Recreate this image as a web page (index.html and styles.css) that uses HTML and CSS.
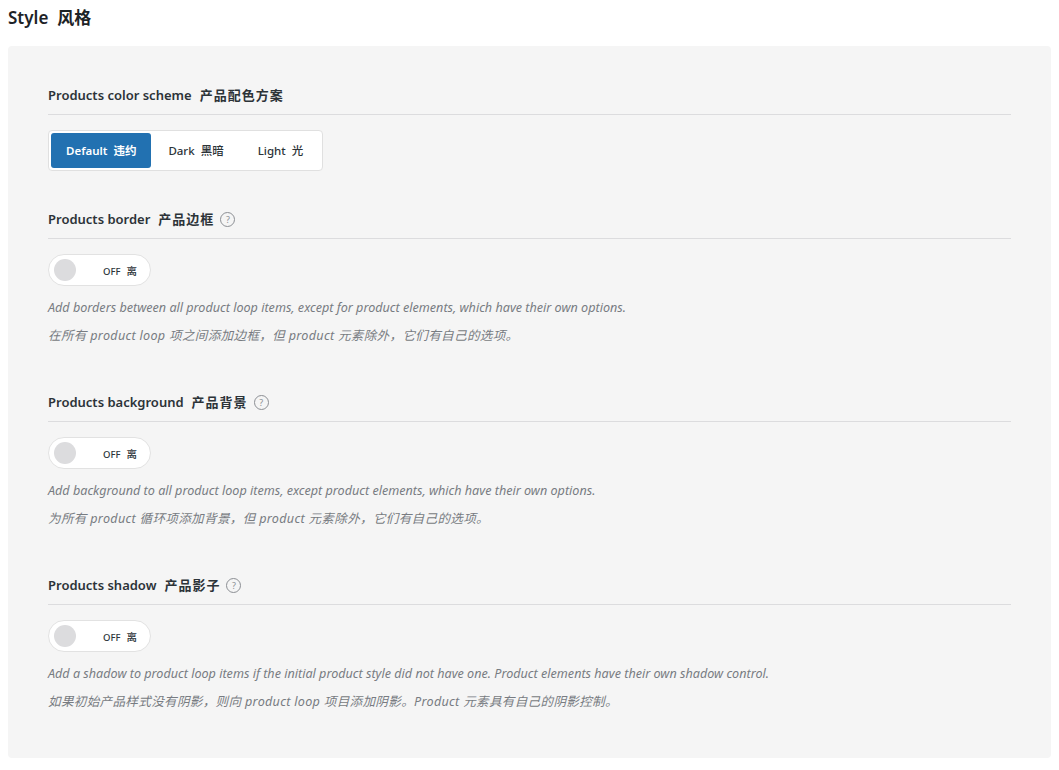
FILE: index.html
```html
<!DOCTYPE html>
<html lang="zh">
<head>
  <meta charset="utf-8">
  <title>Style</title>
  <link rel="stylesheet" href="styles.css">
</head>
<body>
<h2 class="page-title">Style&nbsp; 风格</h2>

<div class="panel">
  <div class="option option-first">
    <h3 class="option-title">Products color scheme<span class="zh">产品配色方案</span></h3>
    <div class="segmented">
      <button class="seg-btn active">Default&nbsp; 违约</button>
      <button class="seg-btn">Dark&nbsp; 黑暗</button>
      <button class="seg-btn">Light&nbsp; 光</button>
    </div>
  </div>

  <div class="option">
    <h3 class="option-title">Products border<span class="zh">产品边框</span><span class="help">?</span></h3>
    <label class="toggle"><span class="knob"></span><span class="toggle-text">OFF&nbsp; <span class="zh">离</span></span></label>
    <p class="desc">Add borders between all product loop items, except for product elements, which have their own options.</p>
    <p class="desc zh-line">在所有 product loop 项之间添加边框，但 product 元素除外，它们有自己的选项。</p>
  </div>

  <div class="option">
    <h3 class="option-title">Products background<span class="zh">产品背景</span><span class="help">?</span></h3>
    <label class="toggle"><span class="knob"></span><span class="toggle-text">OFF&nbsp; <span class="zh">离</span></span></label>
    <p class="desc">Add background to all product loop items, except product elements, which have their own options.</p>
    <p class="desc zh-line">为所有 product 循环项添加背景，但 product 元素除外，它们有自己的选项。</p>
  </div>

  <div class="option">
    <h3 class="option-title">Products shadow<span class="zh">产品影子</span><span class="help">?</span></h3>
    <label class="toggle"><span class="knob"></span><span class="toggle-text">OFF&nbsp; <span class="zh">离</span></span></label>
    <p class="desc">Add a shadow to product loop items if the initial product style did not have one. Product elements have their own shadow control.</p>
    <p class="desc zh-line">如果初始产品样式没有阴影，则向 product loop 项目添加阴影。Product 元素具有自己的阴影控制。</p>
  </div>
</div>
</body>
</html>
```

FILE: styles.css
```css
body {
  margin: 6px 8px 8px;
  background: #fff;
  color: #1d2327;
  font-family: "Noto Sans", "Noto Sans CJK SC", sans-serif;
}
.page-title {
  margin: 0 0 16px;
  font-size: 17px;
  line-height: 24px;
  font-weight: 600;
}
.panel {
  background: #f5f5f5;
  border-radius: 4px;
  padding: 39px 40px 42px;
}
.option { margin-top: 42px; }
.option-first { margin-top: 0; margin-bottom: -4px; }
.option-title {
  display: flex;
  align-items: center;
  margin: 0 0 15px;
  padding-bottom: 9px;
  border-bottom: 1px solid #dcdcde;
  font-size: 13px;
  line-height: 20px;
  font-weight: 600;
  color: #2c3338;
}
.option-title .zh { letter-spacing: 1px; margin-left: 8px; }
.help {
  display: inline-flex;
  align-items: center;
  justify-content: center;
  width: 13px;
  height: 13px;
  margin-left: 6px;
  border: 1px solid #8c8f94;
  border-radius: 50%;
  font-size: 9px;
  line-height: 1;
  font-weight: 400;
  color: #8c8f94;
}
.segmented {
  display: inline-flex;
  padding: 2px;
  background: #fff;
  border: 1px solid #e0e0e0;
  border-radius: 4px;
}
.seg-btn {
  height: 35px;
  padding: 0 17px;
  border: 0;
  border-radius: 3px;
  background: transparent;
  font-family: inherit;
  font-size: 11.5px;
  line-height: 1;
  font-weight: 500;
  color: #2c3338;
}
.seg-btn.active {
  background: #2271b1;
  color: #fff;
  font-weight: 600;
  padding: 0 15px;
}
.toggle {
  display: flex;
  align-items: center;
  box-sizing: border-box;
  width: 103px;
  height: 32px;
  padding: 0 5px;
  background: #fff;
  border: 1px solid #e2e2e2;
  border-radius: 16px;
}
.knob {
  width: 22px;
  height: 22px;
  border-radius: 50%;
  background: #dcdcde;
}
.toggle-text {
  margin-left: 27px;
  font-size: 9.5px;
  font-weight: 500;
  color: #2c3338;
}
.toggle-text .zh { font-size: 10.5px; margin-left: 1px; }
.desc {
  margin: 0;
  font-size: 12.6px;
  line-height: 28px;
  font-style: italic;
  color: #787c82;
}
.zh-line { letter-spacing: 0.3px; }
.toggle + .desc { margin-top: 8px; }
```
